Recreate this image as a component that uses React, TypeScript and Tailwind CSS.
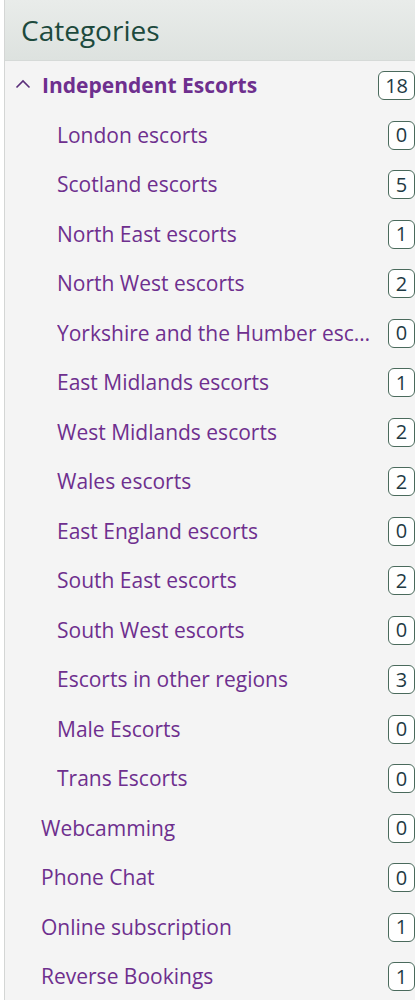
import React from 'react';

type Cat = { name: string; count: number; sub?: boolean };

const regions: Cat[] = [
    { name: 'London escorts', count: 0 },
    { name: 'Scotland escorts', count: 5 },
    { name: 'North East escorts', count: 1 },
    { name: 'North West escorts', count: 2 },
    { name: 'Yorkshire and the Humber escorts', count: 0 },
    { name: 'East Midlands escorts', count: 1 },
    { name: 'West Midlands escorts', count: 2 },
    { name: 'Wales escorts', count: 2 },
    { name: 'East England escorts', count: 0 },
    { name: 'South East escorts', count: 2 },
    { name: 'South West escorts', count: 0 },
    { name: 'Escorts in other regions', count: 3 },
    { name: 'Male Escorts', count: 0 },
    { name: 'Trans Escorts', count: 0 },
];

const others: Cat[] = [
    { name: 'Webcamming', count: 0 },
    { name: 'Phone Chat', count: 0 },
    { name: 'Online subscription', count: 1 },
    { name: 'Reverse Bookings', count: 1 },
];

const Badge = ({ n }: { n: number }) => (
    <span className="shrink-0 h-[29px] min-w-[27px] px-[6px] flex items-center justify-center bg-white border border-[#4a6a5c] rounded-[6px] text-[#1e3a44] text-[20px] leading-none">
        {n}
    </span>
);

const Row = ({ cat, indent }: { cat: Cat; indent: boolean }) => (
    <div className={`h-[49.5px] flex items-center justify-between gap-[16px] ${indent ? 'pl-[52px]' : 'pl-[36px]'}`}>
        <span className="truncate text-[#6e2f8e] text-[21px]">{cat.name}</span>
        <Badge n={cat.count} />
    </div>
);

export default function App() {
    return (
        <div className="w-[415px] h-[1000px] pl-[4px] bg-white overflow-hidden" style={{ fontFamily: '"Open Sans", "Noto Sans", sans-serif' }}>
            <div className="h-full border-l border-[#d4d6d5] bg-[#f4f4f4] overflow-hidden">
                <div className="h-[61px] flex items-center pl-[16px] bg-gradient-to-b from-[#e9ecea] to-[#dde2df] border-b border-[#d6dad8]">
                    <h2 className="text-[#1d4a3d] text-[28px] leading-none">Categories</h2>
                </div>
                <div>
                    <div className="h-[49.5px] flex items-center justify-between gap-3 pl-[10px]">
                        <div className="flex items-center gap-[11px] min-w-0">
                            <svg width="16" height="10" viewBox="0 0 16 10" fill="none" stroke="#5a2e7a" strokeWidth="1.6" className="shrink-0 -mt-[4px]">
                                <path d="M1.5 8.5 L8 2 L14.5 8.5" />
                            </svg>
                            <span className="truncate text-[#6e2f8e] text-[21px] font-bold">Independent Escorts</span>
                        </div>
                        <Badge n={18} />
                    </div>
                    {regions.map((c) => (
                        <Row key={c.name} cat={c} indent />
                    ))}
                    {others.map((c) => (
                        <Row key={c.name} cat={c} indent={false} />
                    ))}
                </div>
            </div>
        </div>
    );
}
